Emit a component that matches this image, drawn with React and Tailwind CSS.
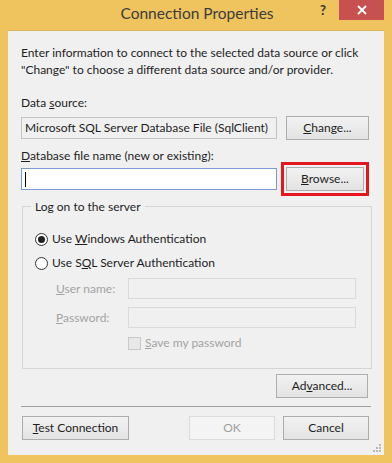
import React from 'react';

const btn = 'h-[24px] flex items-center justify-center border border-[#adadad] bg-gradient-to-b from-[#f2f2f2] to-[#e3e3e3] text-[#1e1e1e]';

function Radio({ checked, children }) {
  return (
    <div className="flex items-center h-[20px]">
      <span className="w-[13px] h-[13px] rounded-full border border-[#333] bg-white flex items-center justify-center">
        {checked && <span className="w-[7px] h-[7px] rounded-full bg-[#222]"></span>}
      </span>
      <span className="ml-[4px]">{children}</span>
    </div>
  );
}

export default function App() {
  return (
    <div className="w-[392px] h-[463px] bg-[#efc45e] flex flex-col font-['Lato','Noto_Sans',sans-serif] text-[12px] text-[#1e1e1e] overflow-hidden whitespace-nowrap">
      <div className="h-[30px] flex relative">
        <div className="flex-1 flex items-center justify-center pl-[2px] pb-[2px] text-[15.5px] text-[#3c3c3c]">
          Connection Properties
        </div>
        <div className="absolute right-[8px] top-0 flex">
          <div className="w-[32px] h-[20px] flex items-center justify-center text-[13px] font-bold text-[#333] pt-[2px]">?</div>
          <div className="w-[45px] h-[20px] bg-[#c75050] flex items-center justify-center">
            <svg width="10" height="10" viewBox="0 0 10 10">
              <path d="M1 1 L9 9 M9 1 L1 9" stroke="#fff" strokeWidth="1.8" />
            </svg>
          </div>
        </div>
      </div>

      <div className="mx-[8px] mb-[8px] flex-1 bg-[#f0f0f0] border-t border-[#d8b660] relative pl-[13px] pr-[14px] pt-[13px]">
        <p className="leading-[17px]">
          Enter information to connect to the selected data source or click<br />
          "Change" to choose a different data source and/or provider.
        </p>

        <div className="mt-[16px] leading-[17px]">Data <u>s</u>ource:</div>
        <div className="mt-[5px] flex items-center">
          <div className="w-[256px] h-[22px] border border-[#c4c4c4] bg-[#f0f0f0] flex items-center pl-[3px]">
            Microsoft SQL Server Database File (SqlClient)
          </div>
          <div className={btn + ' ml-[9px] w-[83px]'}>
            <span><u>C</u>hange...</span>
          </div>
        </div>

        <div className="mt-[7px] leading-[17px]"><u>D</u>atabase file name (new or existing):</div>
        <div className="mt-[-2px] flex items-center">
          <div className="w-[256px] h-[22px] border border-[#7a9ad0] bg-white flex items-center pl-[3px]">
            <span className="w-[1px] h-[15px] bg-black"></span>
          </div>
          <div className="ml-[4px] w-[88px] h-[34px] border-[3px] border-[#e4161f] flex items-center justify-center">
            <div className={btn + ' w-[78px] h-[22px]'}>
              <span><u>B</u>rowse...</span>
            </div>
          </div>
        </div>

        <fieldset className="mt-[2px] w-[350px] h-[171px] border border-[#d5d5d5] pl-[12px] pr-[13px] pt-[6px] ml-[1px]">
          <legend className="ml-[-4px] px-[4px] leading-[17px]">Log on to the server</legend>
          <div className="mt-[8px] flex flex-col gap-[4px]">
            <Radio checked>Use <u>W</u>indows Authentication</Radio>
            <Radio>Use S<u>Q</u>L Server Authentication</Radio>
          </div>
          <div className="mt-[5px] pl-[21px] text-[#a3a3a3]">
            <div className="flex items-center h-[21px]">
              <span className="w-[72px]"><u>U</u>ser name:</span>
              <div className="w-[228px] h-[21px] border border-[#dadada] bg-[#f0f0f0]"></div>
            </div>
            <div className="flex items-center h-[21px] mt-[8px]">
              <span className="w-[72px]"><u>P</u>assword:</span>
              <div className="w-[228px] h-[21px] border border-[#dadada] bg-[#f0f0f0]"></div>
            </div>
            <div className="flex items-center mt-[8px] ml-[72px] h-[14px]">
              <span className="w-[13px] h-[13px] border border-[#c8c8c8] bg-[#e8e8e8]"></span>
              <span className="ml-[4px]"><u>S</u>ave my password</span>
            </div>
          </div>
        </fieldset>

        <div className="mt-[5px] flex justify-end pr-[2px]">
          <div className={btn + ' w-[92px]'}>
            <span>Ad<u>v</u>anced...</span>
          </div>
        </div>

        <div className="mt-[8px] h-px bg-[#a0a0a0] w-[350px]"></div>

        <div className="mt-[9px] flex items-center">
          <div className={btn + ' w-[107px] ml-[1px]'}>
            <span><u>T</u>est Connection</span>
          </div>
          <div className="flex-1"></div>
          <div className="w-[86px] h-[24px] flex items-center justify-center border border-[#dcdcdc] bg-[#f4f4f4] text-[#a0a0a0]">OK</div>
          <div className={btn + ' w-[86px] ml-[8px] mr-[1px]'}>
            <span>Cancel</span>
          </div>
        </div>

        <svg className="absolute right-[3px] bottom-[3px]" width="8" height="8" viewBox="0 0 8 8">
          <rect x="6" y="0" width="2" height="2" fill="#b8b8b8" />
          <rect x="3" y="3" width="2" height="2" fill="#b8b8b8" />
          <rect x="6" y="3" width="2" height="2" fill="#b8b8b8" />
          <rect x="0" y="6" width="2" height="2" fill="#b8b8b8" />
          <rect x="3" y="6" width="2" height="2" fill="#b8b8b8" />
          <rect x="6" y="6" width="2" height="2" fill="#b8b8b8" />
        </svg>
      </div>
    </div>
  );
}
